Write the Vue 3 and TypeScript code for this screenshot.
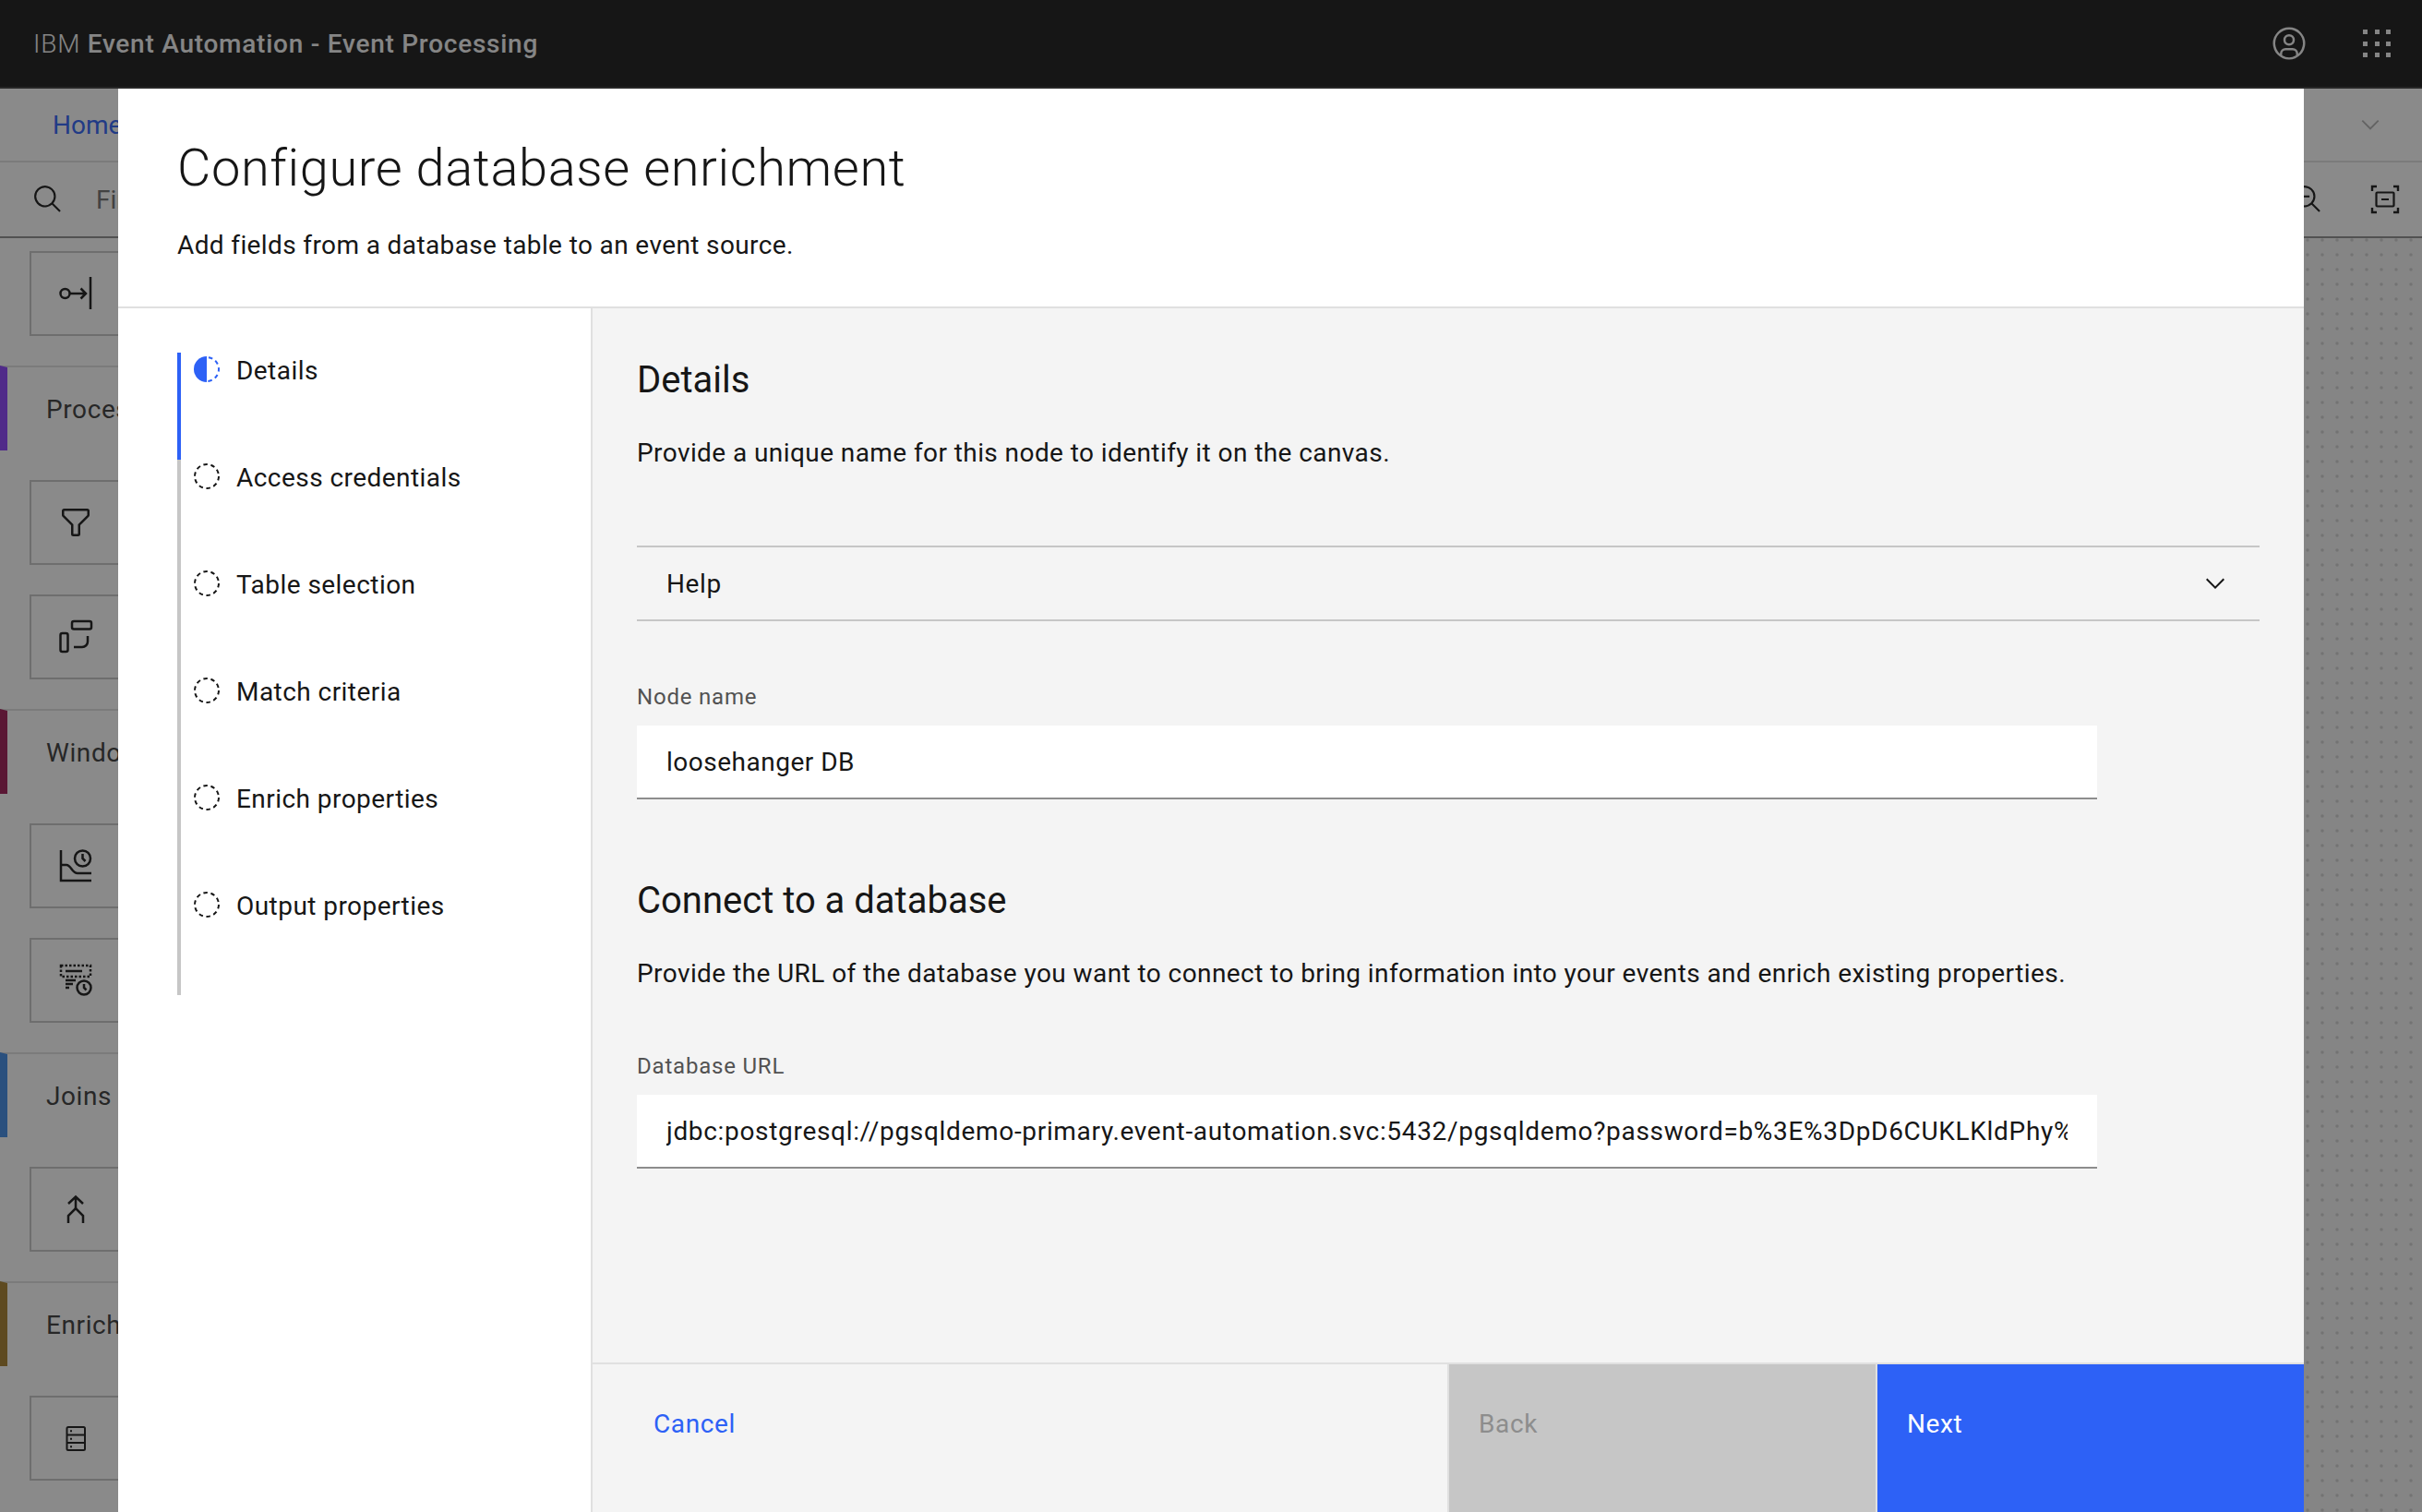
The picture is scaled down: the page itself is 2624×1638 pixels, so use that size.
<script setup lang="ts">
const steps = [
  "Details",
  "Access credentials",
  "Table selection",
  "Match criteria",
  "Enrich properties",
  "Output properties",
];

const databaseUrl =
  "jdbc:postgresql://pgsqldemo-primary.event-automation.svc:5432/pgsqldemo?password=b%3E%3DpD6CUKLKldPhy%3D";
</script>

<template>
  <div class="page">
    <header class="topbar">
      <div class="brand">IBM <b>Event Automation - Event Processing</b></div>
      <div class="topbar-icons">
        <svg class="user" viewBox="0 0 32 32" fill="currentColor">
          <path d="M16 8a5 5 0 1 0 5 5A5 5 0 0 0 16 8zm0 8a3 3 0 1 1 3-3A3.0034 3.0034 0 0 1 16 16z" />
          <path d="M16 2a14 14 0 1 0 14 14A14.0158 14.0158 0 0 0 16 2zM10 26.3765V25a3.0033 3.0033 0 0 1 3-3h6a3.0033 3.0033 0 0 1 3 3v1.3765a11.8989 11.8989 0 0 1-12 0zM23.9925 24.9258A5.0016 5.0016 0 0 0 19 20H13a5.0016 5.0016 0 0 0-4.9925 4.9258 12 12 0 1 1 15.985 0z" />
        </svg>
        <div class="switcher">
          <i v-for="n in 9" :key="n"></i>
        </div>
      </div>
    </header>

    <nav class="crumbs">
      <a class="home">Home</a>
      <svg class="crumb-chevron" viewBox="0 0 32 32" fill="currentColor">
        <path d="M16 22L6 12l1.4-1.4 8.6 8.6 8.6-8.6L26 12z" />
      </svg>
    </nav>

    <div class="toolbar">
      <div class="find">
        <svg class="tool" viewBox="0 0 32 32" fill="currentColor">
          <path d="M29,27.5859l-7.5521-7.5521a11.0177,11.0177,0,1,0-1.4141,1.4141L27.5859,29ZM4,13a9,9,0,1,1,9,9A9.01,9.01,0,0,1,4,13Z" />
        </svg>
        <span class="find-text">Find</span>
      </div>
      <div class="tools">
        <svg class="tool" viewBox="0 0 32 32" fill="currentColor">
          <path d="M29,27.5859l-7.5521-7.5521a11.0177,11.0177,0,1,0-1.4141,1.4141L27.5859,29ZM4,13a9,9,0,1,1,9,9A9.01,9.01,0,0,1,4,13Z" />
          <rect x="8" y="12" width="10" height="2" />
        </svg>
        <svg class="tool" viewBox="0 0 34 34" fill="none" stroke="currentColor" stroke-width="2">
          <path stroke-width="2.4" d="M3 8V3h5M26 3h5v5M31 26v5h-5M8 31H3v-5" />
          <rect x="7.5" y="9.5" width="19" height="15" rx="1" stroke-width="2.2" />
          <path d="M13 17h8" />
        </svg>
      </div>
    </div>

    <div class="workspace">
      <aside class="palette">
        <div class="tile first">
          <svg class="node-icon" viewBox="0 0 40 40" fill="none" stroke="currentColor" stroke-width="2.5">
            <circle cx="8.5" cy="20" r="5" />
            <path d="M13.5 20H31M25.5 14.5L31 20l-5.5 5.5" />
            <path d="M36 2v35" />
          </svg>
        </div>

        <div class="group purple">Processors</div>
        <div class="tile">
          <svg class="node-icon" viewBox="0 0 32 32" fill="currentColor">
            <path d="M18,28H14a2,2,0,0,1-2-2V18.41L4.59,11A2,2,0,0,1,4,9.59V6A2,2,0,0,1,6,4H26a2,2,0,0,1,2,2V9.59A2,2,0,0,1,27.41,11L20,18.41V26A2,2,0,0,1,18,28ZM6,6V9.59l8,8V26h4V17.59l8-8V6Z" />
          </svg>
        </div>
        <div class="tile">
          <svg class="node-icon" viewBox="0 0 40 40" fill="none" stroke="currentColor" stroke-width="2.5">
            <rect x="16" y="3" width="21" height="8.5" rx="2" />
            <rect x="3.5" y="16" width="8" height="20" rx="2" />
            <path d="M18 31h9a6 6 0 0 0 6-6v-6" />
          </svg>
        </div>

        <div class="group wine">Windows</div>
        <div class="tile">
          <svg class="node-icon" viewBox="0 0 40 40" fill="none" stroke="currentColor" stroke-width="2.5">
            <path d="M4 3v33h33" />
            <path d="M4 19h6c5 0 6 9 12 9h15" />
            <circle cx="27.5" cy="12" r="8.5" />
            <path d="M27.5 7v5l3 3" />
          </svg>
        </div>
        <div class="tile">
          <svg class="node-icon" viewBox="0 0 40 40" fill="none" stroke="currentColor" stroke-width="2.5">
            <rect x="4" y="4" width="32" height="12" stroke-dasharray="2.5 2" />
            <path d="M9 10h18M9 20h11M9 24h8M9 28h4" />
            <circle cx="29" cy="28" r="7.5" />
            <path d="M29 24v4l2.5 2.5" />
          </svg>
        </div>

        <div class="group blue">Joins</div>
        <div class="tile">
          <svg class="node-icon" viewBox="0 0 40 40" fill="none" stroke="currentColor" stroke-width="2.5">
            <path d="M12 14l8-7.5 8 7.5M20 6.5V19" />
            <path d="M12 35v-8l8-8 8 8v8" />
          </svg>
        </div>

        <div class="group gold">Enrichment</div>
        <div class="tile">
          <svg class="node-icon" viewBox="0 0 40 40" fill="none" stroke="currentColor" stroke-width="2">
            <rect x="10.5" y="8" width="19.5" height="25" rx="1.5" />
            <path d="M10.5 16.5H30M10.5 25H30" />
            <path d="M14 12.2h2M14 20.7h2M14 29.2h2" />
          </svg>
        </div>
      </aside>
      <main class="canvas"></main>
    </div>

    <div class="backdrop"></div>

    <section class="modal">
      <div class="modal-head">
        <h1>Configure database enrichment</h1>
        <p>Add fields from a database table to an event source.</p>
      </div>

      <div class="modal-body">
        <ol class="stepper">
          <li v-for="(step, i) in steps" :key="step" class="step" :class="{ current: i === 0 }">
            <svg class="step-icon" viewBox="0 0 28 28">
              <path v-if="i === 0" d="M14 0a14 14 0 0 0 0 28z" fill="#2d61f6" />
              <path
                v-if="i === 0"
                d="M14 1a13 13 0 0 1 0 26"
                fill="none"
                stroke="#2d61f6"
                stroke-width="2"
                stroke-dasharray="4.5 3.67"
                stroke-dashoffset="-2"
              />
              <circle
                v-else
                cx="14"
                cy="14"
                r="13"
                fill="none"
                stroke="#161616"
                stroke-width="2"
                stroke-dasharray="4.5 3.67"
              />
            </svg>
            <span>{{ step }}</span>
          </li>
        </ol>

        <div class="pane">
          <div class="form">
            <h2>Details</h2>
            <p class="lead">Provide a unique name for this node to identify it on the canvas.</p>

            <div class="accordion">
              <span>Help</span>
              <svg class="acc-chevron" viewBox="0 0 32 32" fill="currentColor">
                <path d="M16 22L6 12l1.4-1.4 8.6 8.6 8.6-8.6L26 12z" />
              </svg>
            </div>

            <label class="field-label name-label">Node name</label>
            <div class="input"><span class="value">loosehanger DB</span></div>

            <h2 class="connect">Connect to a database</h2>
            <p class="lead">
              Provide the URL of the database you want to connect to bring information into your events and enrich
              existing properties.
            </p>

            <label class="field-label url-label">Database URL</label>
            <div class="input"><span class="value url">{{ databaseUrl }}</span></div>
          </div>

          <div class="actions">
            <a class="cancel">Cancel</a>
            <div class="btn back">Back</div>
            <div class="btn next">Next</div>
          </div>
        </div>
      </div>
    </section>
  </div>
</template>

<style>
html,
body {
  margin: 0;
  overflow: hidden;
}
</style>

<style scoped>
.page {
  position: relative;
  width: 2624px;
  height: 1638px;
  overflow: hidden;
  display: flex;
  flex-direction: column;
  background: #fff;
  color: #161616;
  font-family: "Roboto", "Liberation Sans", sans-serif;
  font-size: 28px;
}

.topbar {
  height: 94px;
  flex: none;
  background: #161616;
  border-bottom: 2px solid #393939;
  color: #f4f4f4;
  display: flex;
  align-items: center;
  justify-content: space-between;
  padding: 0 34px 0 36px;
}
.brand {
  font-size: 28px;
  font-weight: 300;
  letter-spacing: 0.75px;
}
.brand b {
  font-weight: 500;
}
.topbar-icons {
  display: flex;
  align-items: center;
  gap: 60px;
}
.user {
  width: 40px;
  height: 40px;
}
.switcher {
  display: grid;
  grid-template-columns: repeat(3, 5px);
  grid-auto-rows: 5px;
  gap: 7.5px;
}
.switcher i {
  background: #f4f4f4;
}

.crumbs {
  height: 78px;
  flex: none;
  border-bottom: 2px solid #e0e0e0;
  display: flex;
  align-items: center;
  justify-content: space-between;
  padding: 0 41px 0 57px;
}
.home {
  color: #2d61f6;
}
.crumb-chevron {
  width: 30px;
  height: 30px;
  color: #b0b0b0;
}

.toolbar {
  height: 80px;
  flex: none;
  border-bottom: 2px solid #8d8d8d;
  display: flex;
  align-items: center;
  justify-content: space-between;
  padding: 0 23px 0 35px;
}
.find {
  display: flex;
  align-items: center;
  gap: 35px;
}
.find-text {
  color: #6f6f6f;
}
.tools {
  display: flex;
  gap: 50px;
}
.tool {
  width: 34px;
  height: 34px;
}

.workspace {
  flex: 1;
  display: flex;
  min-height: 0;
}
.palette {
  width: 256px;
  flex: none;
  display: flex;
  flex-direction: column;
}
.canvas {
  flex: 1;
  background-color: #f4f4f4;
  background-image: radial-gradient(circle, #d0d0d0 1px, transparent 2.3px);
  background-size: 16px 16px;
  background-position: -4px -6px;
}

.group {
  height: 90px;
  flex: none;
  margin-top: 32px;
  border-top: 2px solid #e0e0e0;
  border-left: 8px solid;
  padding-left: 42px;
  display: flex;
  align-items: center;
  letter-spacing: 0.6px;
  color: #393939;
}
.purple {
  border-left-color: #8a3ffc;
}
.wine {
  border-left-color: #9f1853;
}
.blue {
  border-left-color: #3f8ae6;
}
.gold {
  border-left-color: #a67e2a;
}

.tile {
  height: 88px;
  width: 200px;
  flex: none;
  margin: 32px 0 0 32px;
  border: 2px solid #c6c6c6;
  display: flex;
  align-items: center;
  padding-left: 28px;
}
.tile.first {
  margin-top: 14px;
}
.node-icon {
  width: 40px;
  height: 40px;
}

.backdrop {
  position: absolute;
  inset: 0;
  background: rgba(22, 22, 22, 0.5);
}

.modal {
  position: absolute;
  left: 128px;
  right: 128px;
  top: 96px;
  bottom: 0;
  display: flex;
  flex-direction: column;
  background: #fff;
}
.modal-head {
  height: 238px;
  flex: none;
  box-sizing: border-box;
  border-bottom: 2px solid #e0e0e0;
  padding: 52px 64px 0;
}
.modal-head h1 {
  margin: 0;
  font-size: 56px;
  line-height: 68px;
  font-weight: 300;
  letter-spacing: 0.6px;
}
.modal-head p {
  margin: 32px 0 0;
  line-height: 36px;
  font-weight: 400;
  letter-spacing: 0.38px;
}

.modal-body {
  flex: 1;
  display: flex;
  min-height: 0;
}
.stepper {
  width: 514px;
  flex: none;
  margin: 0;
  padding: 48px 0 0 64px;
  box-sizing: border-box;
  border-right: 2px solid #e0e0e0;
  list-style: none;
}
.step {
  height: 116px;
  box-sizing: border-box;
  border-left: 4px solid #c6c6c6;
  padding: 4px 0 0 14px;
  display: flex;
  align-items: flex-start;
  gap: 18px;
  line-height: 32px;
  letter-spacing: 0.45px;
}
.step.current {
  border-left-color: #2d61f6;
}
.step-icon {
  width: 28px;
  height: 28px;
  flex: none;
}

.pane {
  flex: 1;
  min-width: 0;
  display: flex;
  flex-direction: column;
  background: #f4f4f4;
}
.form {
  flex: 1;
  padding: 54px 48px 0;
}
.form h2 {
  margin: 0;
  font-size: 40px;
  line-height: 48px;
  font-weight: 400;
  letter-spacing: 0;
}
.lead {
  margin: 37px 0 0;
  line-height: 36px;
  letter-spacing: 0.42px;
}
.accordion {
  margin-top: 82px;
  height: 78px;
  border-top: 2px solid #c6c6c6;
  border-bottom: 2px solid #c6c6c6;
  padding: 0 32px;
  display: flex;
  align-items: center;
  justify-content: space-between;
  letter-spacing: 0.62px;
}
.acc-chevron {
  width: 32px;
  height: 32px;
}
.field-label {
  display: block;
  font-size: 24px;
  line-height: 30px;
  color: #525252;
  letter-spacing: 0.8px;
}
.name-label {
  margin: 67px 0 16px;
}
.url-label {
  margin: 67px 0 16px;
}
.input {
  width: 1582px;
  height: 80px;
  background: #fff;
  border-bottom: 2px solid #8d8d8d;
  padding: 0 32px;
  box-sizing: border-box;
  display: flex;
  align-items: center;
}
.value {
  display: block;
  white-space: nowrap;
  overflow: hidden;
  letter-spacing: 0.5px;
}
.value.url {
  letter-spacing: 0.68px;
}
.form .connect {
  margin-top: 86px;
}

.actions {
  height: 160px;
  flex: none;
  border-top: 2px solid #e0e0e0;
  display: grid;
  grid-template-columns: 1fr 464px 464px;
  letter-spacing: 0.62px;
}
.cancel {
  color: #2d61f6;
  padding: 45px 0 0 66px;
  line-height: 40px;
}
.btn {
  padding: 45px 0 0 32px;
  line-height: 40px;
  box-sizing: border-box;
}
.back {
  background: #c6c6c6;
  color: #8d8d8d;
  border-left: 2px solid #e0e0e0;
}
.next {
  background: #2d61f6;
  color: #fff;
  border-left: 2px solid #e0e0e0;
}
</style>
